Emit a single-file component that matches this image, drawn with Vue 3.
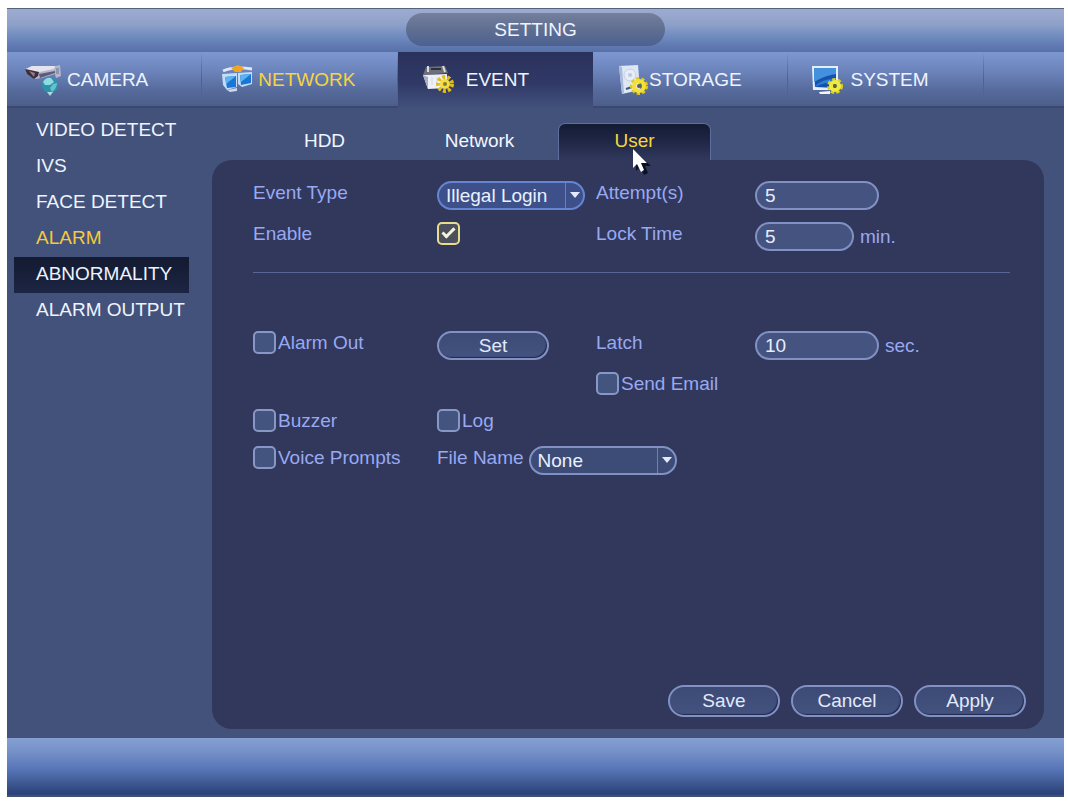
<script setup>
import { ref } from 'vue'

const sections = [
  { id: 'camera', label: 'CAMERA' },
  { id: 'network', label: 'NETWORK' },
  { id: 'event', label: 'EVENT' },
  { id: 'storage', label: 'STORAGE' },
  { id: 'system', label: 'SYSTEM' },
]
const menu = ['VIDEO DETECT', 'IVS', 'FACE DETECT', 'ALARM', 'ABNORMALITY', 'ALARM OUTPUT']
const tabs = ['HDD', 'Network', 'User']

const eventType = ref('Illegal Login')
const enabled = ref(true)
const attempts = ref('5')
const lockTime = ref('5')
const alarmOut = ref(false)
const latch = ref('10')
const sendEmail = ref(false)
const buzzer = ref(false)
const log = ref(false)
const voicePrompts = ref(false)
const fileName = ref('None')
</script>

<template>
  <div class="page">
    <div class="window">
      <header class="titlebar">
        <h1 class="title">SETTING</h1>
      </header>

      <nav class="nav" aria-label="Sections">
        <a
          v-for="s in sections"
          :key="s.id"
          href="#"
          class="nav-item"
          :class="[s.id, { active: s.id === 'event', hot: s.id === 'network' }]"
        >
          <svg v-if="s.id === 'camera'" class="icon" viewBox="0 0 38 32" aria-hidden="true">
            <path d="M0 5 L7 2 L31 2 L35 1 L36 12 L31 14 L30 10 L17 14 L10 15 L2 10 Z" fill="#b4b6cb" />
            <path d="M7 2 L30 2 L29 5 L14 8 L1 5 Z" fill="#e4e4ef" />
            <path d="M0 5 L14 8 L13 12 L9 15 L2 10 Z" fill="#3a2f3d" />
            <path d="M4 7 L10 9 L9 13 Z" fill="#9c7c84" />
            <path d="M14 10 L30 7 L30 9 L15 14 Z" fill="#5c5d7c" />
            <path d="M31 4 L34 4 L34 10 L31 10 Z" fill="#8d95b0" />
            <circle cx="25" cy="21" r="8" fill="#2e93a8" />
            <path d="M18 18 Q21 13 26 14 L29 18 L25 21 L20 21 Z" fill="#8fdbe0" />
            <path d="M28 20 L32 19 Q32 24 27 28 L25 24 Z" fill="#62c3cc" />
            <path d="M22 28 L28 28 L25 32 Z" fill="#a9dbe6" />
          </svg>
          <svg v-else-if="s.id === 'network'" class="icon" viewBox="0 0 38 32" aria-hidden="true">
            <path d="M5 7 Q16 2 34 5" fill="none" stroke="#dfe6f4" stroke-width="3" />
            <path d="M13 4 L20 1 L26 4 L23 8 L17 8 Z" fill="#efa51d" />
            <path d="M4 10 L19 9 L19 23 L9 26 L5 21 Z" fill="#c4dcf5" />
            <path d="M7 13 L18 12 L18 23 L9 24 Z" fill="#1776d6" />
            <path d="M7 13 L18 12 L8 20 Z" fill="#5db3f0" />
            <path d="M20 9 L34 8 L34 20 L24 23 L20 20 Z" fill="#c4dcf5" />
            <path d="M22 11 L33 10 L33 19 L23 21 Z" fill="#1776d6" />
            <path d="M22 11 L33 10 L23 18 Z" fill="#5db3f0" />
            <path d="M9 26 L19 24 L19 27 L12 28 Z" fill="#c9d7ec" />
          </svg>
          <svg v-else-if="s.id === 'event'" class="icon" viewBox="0 0 38 32" aria-hidden="true">
            <path d="M6 3 L25 2 L28 9 L3 11 Z" fill="#6d7078" />
            <path d="M8 2 L8 8 M23 2 L25 8" stroke="#d8dbe0" stroke-width="2" />
            <path d="M11 5 L21 5" stroke="#2d3040" stroke-width="2" />
            <path d="M3 11 L27 10 L27 24 L8 25 Z" fill="#eef0f7" />
            <path d="M3 11 L8 13 L8 25 L6 20 Z" fill="#aab0c4" />
            <path d="M12 13 L12 21 M17 13 L17 21" stroke="#d3d7e6" />
            <circle cx="25" cy="20" r="7" fill="none" stroke="#e0bd1c" stroke-width="4" stroke-dasharray="3 2" />
            <circle cx="25" cy="20" r="5" fill="#f3dc45" />
            <circle cx="25" cy="20" r="2" fill="#8c7a2a" />
          </svg>
          <svg v-else-if="s.id === 'storage'" class="icon" viewBox="0 0 38 32" aria-hidden="true">
            <path d="M8 2 L27 1 L29 26 L11 30 Z" fill="#dfe7f5" />
            <path d="M8 2 L11 30 L13 29 L11 3 Z" fill="#a7bad9" />
            <circle cx="19" cy="11" r="6" fill="#e6edf8" stroke="#c3cfe4" />
            <circle cx="19" cy="11" r="2" fill="#bcc8dd" />
            <path d="M15 25 L21 23" stroke="#40577e" stroke-width="2" />
            <circle cx="28" cy="22" r="7" fill="none" stroke="#e0c81c" stroke-width="4" stroke-dasharray="3 2" />
            <circle cx="28" cy="22" r="5" fill="none" stroke="#f3e13a" stroke-width="4" />
            <circle cx="28" cy="22" r="2" fill="#69602b" />
          </svg>
          <svg v-else class="icon" viewBox="0 0 38 32" aria-hidden="true">
            <path d="M6 2 L32 2 L32 26 L7 26 Z" fill="#e3effb" />
            <path d="M8 4 L30 4 L30 24 L9 23 Z" fill="#1552ae" />
            <path d="M8 4 L30 4 L30 10 Q20 11 8 18 Z" fill="#4290de" />
            <path d="M9 22 Q17 14 30 15 L30 18 Q18 18 9 23 Z" fill="#2f7dd2" />
            <path d="M13 28 L24 27 L24 30 L14 30 Z" fill="#f1f5fb" />
            <circle cx="29" cy="22" r="6" fill="none" stroke="#d9d31e" stroke-width="4" stroke-dasharray="3 2" />
            <circle cx="29" cy="22" r="4" fill="none" stroke="#f0ea3c" stroke-width="4" />
            <circle cx="29" cy="22" r="2" fill="#69602b" />
          </svg>
          <span>{{ s.label }}</span>
        </a>
      </nav>

      <div class="body">
        <aside class="sidebar">
          <a
            v-for="m in menu"
            :key="m"
            href="#"
            class="menu-item"
            :class="{ selected: m === 'ABNORMALITY', hot: m === 'ALARM' }"
          >{{ m }}</a>
        </aside>

        <main class="main">
          <div class="tabs" role="tablist">
            <button
              v-for="t in tabs"
              :key="t"
              type="button"
              role="tab"
              class="tab"
              :class="{ current: t === 'User' }"
              :aria-selected="t === 'User'"
            >
              {{ t }}
              <svg v-if="t === 'User'" class="cursor" viewBox="0 0 20 26" aria-hidden="true">
                <path d="M4 3 L4 22 L8 18 L12 26 L16 24 L13 17 L19 17 Z" fill="#0b1024" />
                <path d="M1 0 L1 19 L5 15 L9 23 L12 21 L9 14 L15 14 Z" fill="#fff" />
              </svg>
            </button>
          </div>

          <form class="panel" @submit.prevent>
            <div class="grid conditions">
              <label for="event-type">Event Type</label>
              <div class="select lit">
                <select id="event-type" v-model="eventType">
                  <option>Illegal Login</option>
                </select>
              </div>
              <label for="attempts">Attempt(s)</label>
              <div class="field">
                <input id="attempts" v-model="attempts" type="text" class="text" />
              </div>

              <label for="enable">Enable</label>
              <div><input id="enable" v-model="enabled" type="checkbox" class="box" /></div>
              <label for="lock-time">Lock Time</label>
              <div class="field">
                <input id="lock-time" v-model="lockTime" type="text" class="text short" />
                <span>min.</span>
              </div>
            </div>

            <hr class="rule" />

            <div class="grid actions">
              <label class="check"><input v-model="alarmOut" type="checkbox" class="box" />Alarm Out</label>
              <div><button type="button" class="pill">Set</button></div>
              <label for="latch">Latch</label>
              <div class="field">
                <input id="latch" v-model="latch" type="text" class="text" />
                <span>sec.</span>
              </div>

              <label class="check email"><input v-model="sendEmail" type="checkbox" class="box" />Send Email</label>

              <label class="check first"><input v-model="buzzer" type="checkbox" class="box" />Buzzer</label>
              <label class="check"><input v-model="log" type="checkbox" class="box" />Log</label>

              <label class="check first"><input v-model="voicePrompts" type="checkbox" class="box" />Voice Prompts</label>
              <div class="file">
                <label for="file-name">File Name</label>
                <div class="select">
                  <select id="file-name" v-model="fileName">
                    <option>None</option>
                  </select>
                </div>
              </div>
            </div>

            <div class="buttons">
              <button type="submit" class="pill tall">Save</button>
              <button type="button" class="pill tall">Cancel</button>
              <button type="button" class="pill tall">Apply</button>
            </div>
          </form>
        </main>
      </div>

      <footer class="footer"></footer>
    </div>
  </div>
</template>

<style>
body {
  margin: 0;
  background: #fff;
}
</style>

<style scoped>
.page {
  box-sizing: border-box;
  min-height: 100vh;
  padding: 8px 4px 4px 7px;
  display: flex;
  font-family: "Liberation Sans", Arial, sans-serif;
  font-size: 19px;
  color: #eef4ff;
}
.page *,
.page *::after {
  box-sizing: border-box;
}
.window {
  flex: 1;
  display: flex;
  flex-direction: column;
  background: #43527b;
}
.titlebar {
  height: 44px;
  padding-top: 4px;
  border-top: 1px solid #56617d;
  background: linear-gradient(#9dabd0, #8fa1c9 35%, #6f8abf 65%, #5670a8);
  display: flex;
  justify-content: center;
  align-items: flex-start;
}
.title {
  margin: 0;
  width: 259px;
  height: 33px;
  line-height: 33px;
  border-radius: 17px;
  background: linear-gradient(#757f9c, #5f6e92 50%, #4c6191);
  text-align: center;
  font-size: 19px;
  font-weight: 400;
}
.nav {
  height: 56px;
  display: grid;
  grid-template-columns: repeat(5, 195fr) 80fr;
  background: linear-gradient(#7d97d0, #6c84bc 35%, #576b9c 70%, #4b5e8b);
  border-bottom: 2px solid #394873;
}
.nav-item {
  display: flex;
  align-items: center;
  gap: 4px;
  padding-left: 18px;
  color: #eef4ff;
  text-decoration: none;
  background: linear-gradient(transparent, #4d6091 50%, transparent) right / 1px 100% no-repeat;
}
.icon {
  width: 38px;
  height: 32px;
  flex: none;
}
.nav-item.network {
  padding-left: 16px;
  gap: 2px;
}
.nav-item.event {
  padding-left: 22px;
  gap: 8px;
  height: 56px;
  background: linear-gradient(#2a315c, #303966 55%, #42507c);
}
.nav-item.storage {
  gap: 0;
}
.nav-item.system {
  gap: 6px;
}
.nav-item.hot {
  color: #f5d53f;
}
.body {
  flex: 1;
  display: flex;
}
.sidebar {
  width: 205px;
  flex: none;
  padding: 5px 23px 0 7px;
  display: flex;
  flex-direction: column;
}
.menu-item {
  height: 36px;
  line-height: 34px;
  padding-left: 22px;
  color: #eef4ff;
  text-decoration: none;
  white-space: nowrap;
}
.menu-item.hot {
  color: #f5c93a;
}
.menu-item.selected {
  background: linear-gradient(#131a31, #1c2542);
}
.main {
  flex: 1;
  padding: 15px 20px 9px 0;
  display: flex;
  flex-direction: column;
}
.tabs {
  display: flex;
  gap: 2px;
  padding-left: 36px;
}
.tab {
  position: relative;
  width: 153px;
  height: 37px;
  padding: 0 0 3px;
  border: 1px solid transparent;
  border-bottom: 0;
  border-radius: 7px 7px 0 0;
  background: none;
  color: #f1f6ff;
  font: inherit;
}
.tab.current {
  color: #f5d83a;
  background: linear-gradient(#141b33, #1e2645 45%, #31385c);
  border-color: #5e6e9c;
  border-bottom: 0;
}
.cursor {
  position: absolute;
  left: 73px;
  top: 25px;
  width: 20px;
  height: 26px;
  z-index: 1;
}
.panel {
  flex: 1;
  padding: 21px 18px 12px 41px;
  border-radius: 20px;
  background: #31385c;
  color: #98a9f2;
  display: flex;
  flex-direction: column;
}
.grid {
  display: grid;
  grid-template-columns: 184fr 159fr 159fr 271fr;
  align-items: start;
  line-height: 24px;
}
.conditions {
  grid-template-rows: 41px 41px;
}
.actions {
  grid-template-rows: 41px 37px 37px 29px;
}
.rule {
  width: calc(100% - 16px);
  margin: 9px 0 58px;
  border: 0;
  height: 1px;
  background: #566697;
}
.field {
  display: flex;
  align-items: center;
  gap: 6px;
}
.text {
  width: 124px;
  height: 29px;
  padding: 0 8px;
  border: 2px solid #8291c4;
  border-radius: 15px;
  background: #44537f;
  color: #e6eefc;
  font: inherit;
}
.text.short {
  width: 99px;
}
.select {
  position: relative;
  width: 148px;
  height: 29px;
}
.select select {
  appearance: none;
  width: 100%;
  height: 100%;
  padding: 0 20px 0 7px;
  border: 2px solid #8291c4;
  border-radius: 15px;
  background: linear-gradient(#6f7fb2, #6f7fb2) right 17px top / 1px 100% no-repeat, #3d4b77;
  color: #eaf1ff;
  font: inherit;
}
.select.lit select {
  border-color: #6585d0;
  background-color: #3d5089;
}
.select::after {
  content: "";
  position: absolute;
  right: 5px;
  top: 11px;
  border: 5px solid transparent;
  border-top: 6px solid #e3ebfa;
  border-bottom: 0;
  pointer-events: none;
}
.box {
  appearance: none;
  display: block;
  flex: none;
  width: 23px;
  height: 23px;
  margin: 0;
  border: 2px solid #8798c6;
  border-radius: 5px;
  background: #43547f;
}
.box:checked {
  border-color: #e6dd8e;
  background: #4c505c;
}
.box:checked::after {
  content: "";
  display: block;
  width: 7px;
  height: 13px;
  margin: 1px 0 0 6px;
  border: solid #f4f4dc;
  border-width: 0 3px 3px 0;
  transform: rotate(45deg);
}
.check {
  display: flex;
  gap: 2px;
  white-space: nowrap;
}
.email {
  grid-column: 3;
}
.first {
  grid-column: 1;
}
.file {
  grid-column: 2 / span 3;
  display: flex;
  gap: 5px;
}
.pill {
  display: block;
  width: 112px;
  height: 29px;
  padding: 0;
  border: 2px solid #8291c4;
  border-radius: 15px;
  background: linear-gradient(#3d4a76, #44527f);
  box-shadow: inset -1px -1px 1px #222a4c;
  color: #e1eafb;
  font: inherit;
}
.pill.tall {
  height: 32px;
  border-radius: 16px;
}
.buttons {
  margin-top: auto;
  display: flex;
  justify-content: flex-end;
  gap: 11px;
}
.footer {
  height: 59px;
  background: linear-gradient(#84a0d2, #7590c8 25%, #5775b6 55%, #2e457b 95%);
  border-bottom: 2px solid #41516f;
}
</style>
